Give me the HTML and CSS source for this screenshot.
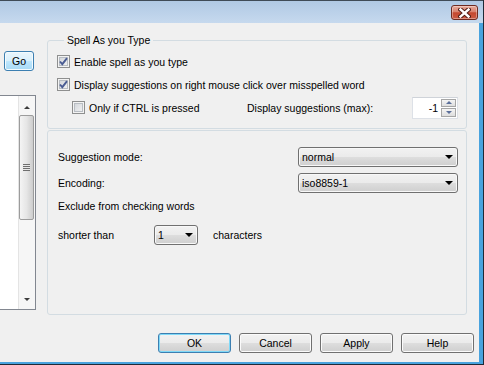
FILE: index.html
```html
<!DOCTYPE html>
<html lang="en">
<head>
  <meta charset="UTF-8">
  <meta name="viewport" content="width=device-width, initial-scale=1.0">
  <title>Spell Check Options</title>
<link rel="stylesheet" href="styles.css">
</head>
<body>

  <div class="window">
    <div class="title-bar">
      <button class="close-btn" type="button" aria-label="Close">
        <svg width="13" height="10" viewBox="0 0 13 10">
          <path d="M2.5 1.5 L10.5 8.5 M10.5 1.5 L2.5 8.5" stroke="#4e1a14" stroke-width="4.4" stroke-linecap="square"/>
          <path d="M2.5 1.5 L10.5 8.5 M10.5 1.5 L2.5 8.5" stroke="#fff" stroke-width="2.4" stroke-linecap="square"/>
        </svg>
      </button>
    </div>

    <div class="client">
      <div class="main">

        <div class="side">
          <button class="btn btn-go" type="button">Go</button>
          <div class="list-box">
            <div class="scroll-bar">
              <span class="scroll-arrow up"></span>
              <span class="scroll-thumb"><span class="grip"></span></span>
              <span class="scroll-track"></span>
              <span class="scroll-arrow down"></span>
            </div>
          </div>
        </div>

        <div class="panel">
          <fieldset class="group group-spell">
            <legend>Spell As you Type</legend>

            <label class="check-row">
              <span class="check-box">
                <svg width="11" height="11" viewBox="0 0 11 11"><path d="M2 5.5 L4.3 8.2 L9 2.2" fill="none" stroke="#4a5c93" stroke-width="1.9"/></svg>
              </span>
              Enable spell as you type
            </label>

            <label class="check-row">
              <span class="check-box">
                <svg width="11" height="11" viewBox="0 0 11 11"><path d="M2 5.5 L4.3 8.2 L9 2.2" fill="none" stroke="#4a5c93" stroke-width="1.9"/></svg>
              </span>
              Display suggestions on right mouse click over misspelled word
            </label>

            <div class="check-row sub-row">
              <label class="ctrl-option"><span class="check-box"></span>Only if CTRL is pressed</label>
              <span>Display suggestions (max):</span>
              <div class="spinner">
                <span class="spinner-value">-1</span>
                <div class="spin-buttons">
                  <span class="spin up"></span>
                  <span class="spin down"></span>
                </div>
              </div>
            </div>
          </fieldset>

          <div class="group group-options">
            <div class="field-row">
              <span class="field-label">Suggestion mode:</span>
              <div class="combo combo-wide">normal</div>
            </div>
            <div class="field-row">
              <span class="field-label">Encoding:</span>
              <div class="combo combo-wide">iso8859-1</div>
            </div>
            <div class="note">Exclude from checking words</div>
            <div class="field-row short-row">
              <span class="short-label">shorter than</span>
              <div class="combo combo-small">1</div>
              <span class="suffix">characters</span>
            </div>
          </div>
        </div>

      </div>

      <div class="actions">
        <button class="btn btn-default" type="button">OK</button>
        <button class="btn" type="button">Cancel</button>
        <button class="btn" type="button">Apply</button>
        <button class="btn" type="button">Help</button>
      </div>
    </div>
  </div>

</body>
</html>
```

FILE: styles.css
```css
* {
  box-sizing: border-box;
}

body {
  margin: 0;
  background-color: #1f2a36;
  font-family: "Liberation Sans", Arial, sans-serif;
  font-size: 10.5px;
  color: #000;
}

.window {
  width: 483px;
  height: 364px;
  display: flex;
  flex-direction: column;
  background-color: #f0f0f0;
  overflow: hidden;
}

/* Barra de titulo */
.title-bar {
  height: 23px;
  flex: none;
  display: flex;
  justify-content: flex-end;
  align-items: flex-start;
  padding: 4px 5px 0 0;
  border-top: 1px solid #3f4b57;
  background: linear-gradient(#b0c9e4, #c6d9ee);
}

.close-btn {
  width: 27px;
  height: 15px;
  padding: 0;
  display: flex;
  align-items: center;
  justify-content: center;
  border: 1px solid #6e2a20;
  border-radius: 3px;
  background: linear-gradient(#e8ab9b 0%, #d8806d 45%, #c4472f 52%, #cc5a43 100%);
  box-shadow: inset 0 0 0 1px rgba(255, 255, 255, 0.35);
}

.client {
  flex: 1;
  display: flex;
  flex-direction: column;
  border-right: 4px solid #49a3de;
  border-bottom: 2px solid #49a3de;
}

.main {
  height: 292px;
  display: flex;
}

/* Coluna da esquerda */
.side {
  width: 36px;
  flex: none;
  display: flex;
  flex-direction: column;
}

.btn {
  width: 73px;
  height: 20px;
  padding: 0;
  font-family: inherit;
  font-size: 10.5px;
  color: #000;
  border: 1px solid #707070;
  border-radius: 3px;
  background: linear-gradient(#f2f2f2 0%, #ebebeb 48%, #dddddd 52%, #cfcfcf 100%);
  box-shadow: inset 0 0 0 1px #fbfbfb;
}

.btn-go {
  width: 30px;
  margin: 28px 0 0 4px;
  border-color: #3c7fb1;
  background: linear-gradient(#eaf6fd 0%, #d9f0fc 48%, #bee6fd 52%, #a7d9f5 100%);
  box-shadow: inset 0 0 0 1px #f4fbfe;
}

.btn-default {
  border-color: #3c7fb1;
  box-shadow: inset 0 0 0 1px #7fd9f8;
}

.list-box {
  margin-top: 24px;
  height: 215px;
  display: flex;
  justify-content: flex-end;
  background-color: #fff;
  border: 1px solid #828790;
  border-left: none;
}

.scroll-bar {
  width: 17px;
  display: flex;
  flex-direction: column;
  background-color: #f6f6f6;
  border-left: 1px solid #e4e4e4;
}

.scroll-arrow {
  height: 19px;
  flex: none;
  display: flex;
  align-items: center;
  justify-content: center;
}

.scroll-arrow::after {
  content: "";
  border-left: 3px solid transparent;
  border-right: 3px solid transparent;
}

.scroll-arrow.up::after {
  border-bottom: 3px solid #3c3c3c;
  margin-top: 3px;
}

.scroll-arrow.down::after {
  border-top: 3px solid #3c3c3c;
}

.scroll-thumb {
  height: 105px;
  width: 15px;
  flex: none;
  display: flex;
  align-items: center;
  justify-content: center;
  border: 1px solid #9c9c9c;
  border-radius: 2px;
  background: linear-gradient(to right, #f4f4f4, #e6e6e6 50%, #cdcdcd);
}

.grip {
  width: 7px;
  height: 7px;
  background: repeating-linear-gradient(#6f6f6f 0 1px, #e8e8e8 1px 2px);
}

.scroll-track {
  flex: 1;
}

/* Paineis */
.panel {
  width: 420px;
  margin-left: 11px;
  padding-top: 11px;
  display: flex;
  flex-direction: column;
  gap: 1px;
}

.group {
  margin: 0;
  border: 1px solid #d3dce2;
  border-radius: 3px;
}

.group-spell {
  padding: 3px 8px 9px 9px;
}

.group-spell legend {
  padding: 0 3px;
  margin-left: 7px;
  line-height: 13px;
}

.check-row {
  height: 23px;
  display: flex;
  align-items: center;
}

.check-box {
  width: 13px;
  height: 13px;
  flex: none;
  margin-right: 4px;
  display: flex;
  align-items: center;
  justify-content: center;
  border: 1px solid #8e8f8f;
  background: linear-gradient(135deg, #cdd1d6, #f7f7f7);
  box-shadow: inset 0 0 0 1px #f3f3f3, inset 0 0 0 2px #b8bdc3;
}

.sub-row {
  padding-left: 15px;
}

.ctrl-option {
  width: 175px;
  display: flex;
  align-items: center;
}

.spinner {
  width: 46px;
  height: 22px;
  margin-left: auto;
  display: flex;
  align-items: center;
  background-color: #fff;
  border: 1px solid #dde1e7;
  border-top-color: #cfd3d9;
}

.spinner-value {
  flex: 1;
  text-align: right;
  padding-right: 3px;
}

.spin-buttons {
  width: 16px;
  height: 20px;
  display: flex;
  flex-direction: column;
  gap: 1px;
  padding: 1px 1px 1px 0;
}

.spin {
  flex: 1;
  display: flex;
  align-items: center;
  justify-content: center;
  border: 1px solid #a6a6a6;
  background: linear-gradient(#f5f5f5, #dedede);
}

.spin::after {
  content: "";
  border-left: 3px solid transparent;
  border-right: 3px solid transparent;
}

.spin.up::after {
  border-bottom: 3px solid #5b6f9a;
}

.spin.down::after {
  border-top: 3px solid #5b6f9a;
}

.group-options {
  height: 185px;
  padding: 16px 8px 0 10px;
}

.field-row {
  height: 20px;
  display: flex;
  align-items: center;
  margin-bottom: 6px;
}

.field-label {
  width: 240px;
}

.combo {
  height: 20px;
  display: flex;
  align-items: center;
  justify-content: space-between;
  padding: 0 4px 0 3px;
  border: 1px solid #707070;
  border-radius: 3px;
  background: linear-gradient(#f2f2f2 0%, #ebebeb 48%, #dddddd 52%, #cfcfcf 100%);
  box-shadow: inset 0 0 0 1px #f8f8f8;
}

.combo::after {
  content: "";
  border-left: 4px solid transparent;
  border-right: 4px solid transparent;
  border-top: 4px solid #000;
}

.combo-wide {
  width: 160px;
}

.combo-small {
  width: 44px;
}

.note {
  height: 14px;
  line-height: 14px;
  margin: 1px 0 12px 0;
}

.short-label {
  width: 96px;
}

.suffix {
  margin-left: 15px;
}

/* Botoes de baixo */
.actions {
  display: flex;
  justify-content: flex-end;
  gap: 8px;
  padding: 18px 5px 0 0;
}
```
